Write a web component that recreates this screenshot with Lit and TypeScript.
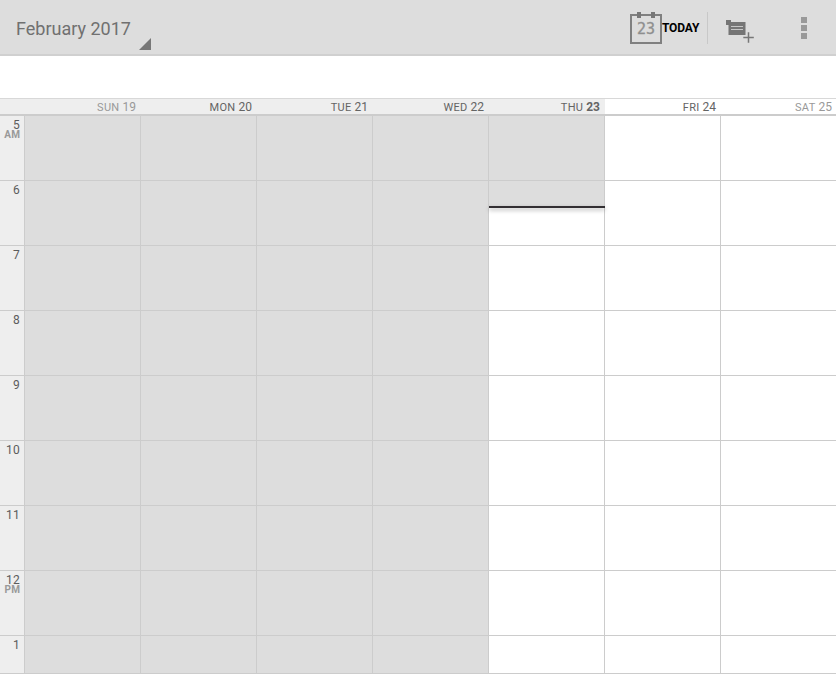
import { LitElement, html, css } from "lit";
import { customElement } from "lit/decorators.js";
import { classMap } from "lit/directives/class-map.js";

interface Day {
  name: string;
  date: number;
  state: "past" | "today" | "future";
  weekend?: boolean;
}

const DAYS: Day[] = [
  { name: "SUN", date: 19, state: "past", weekend: true },
  { name: "MON", date: 20, state: "past" },
  { name: "TUE", date: 21, state: "past" },
  { name: "WED", date: 22, state: "past" },
  { name: "THU", date: 23, state: "today" },
  { name: "FRI", date: 24, state: "future" },
  { name: "SAT", date: 25, state: "future", weekend: true },
];

const HOURS: { label: string; period?: string }[] = [
  { label: "5", period: "AM" },
  { label: "6" },
  { label: "7" },
  { label: "8" },
  { label: "9" },
  { label: "10" },
  { label: "11" },
  { label: "12", period: "PM" },
  { label: "1" },
];

@customElement("calendar-bar")
class CalendarBar extends LitElement {
  static styles = css`
    :host {
      display: flex;
      align-items: flex-start;
      box-sizing: border-box;
      height: 56px;
      background: #ddd;
      border-bottom: 2px solid #d0d0d0;
    }
    .title {
      display: flex;
      flex: 1;
      padding-left: 16px;
      font-size: 18px;
      line-height: 22px;
      color: #707070;
    }
    .month {
      width: 123px;
      margin-top: 18px;
      white-space: nowrap;
    }
    .corner {
      width: 12px;
      height: 12px;
      margin-top: 38px;
    }
    .today {
      display: flex;
      width: 77px;
      height: 32px;
      margin-top: 12px;
      border-right: 1px solid #c8c8c8;
      font-size: 12px;
      font-weight: 700;
      line-height: 32px;
      letter-spacing: -0.15px;
      color: #000;
    }
    .day-icon {
      width: 32px;
      height: 32px;
      flex: none;
    }
    .add {
      width: 30px;
      height: 26px;
      margin: 18px 0 0 17px;
    }
    .more {
      display: grid;
      gap: 2px;
      margin: 17px 29px 0 46px;
    }
    .more i {
      width: 6px;
      height: 6px;
      background: #999;
    }
    .num {
      font: 15px "DejaVu Sans Mono", monospace;
      letter-spacing: 0;
    }
  `;

  render() {
    return html`
      <div class="title">
        <span class="month">February 2017</span>
        <svg class="corner" viewBox="0 0 12 12"><path d="M12 0V12H0Z" fill="#777" /></svg>
      </div>
      <div class="today">
        <svg class="day-icon" viewBox="0 0 32 32">
          <rect x="1" y="3" width="30" height="28" fill="none" stroke="#808080" stroke-width="2" />
          <path d="M7 0h4v6H7zM21 0h4v6h-4z" fill="#777" />
          <text class="num" x="7" y="22" textLength="18" lengthAdjust="spacing" fill="#8b8b8b" stroke="#999" stroke-width=".4">23</text>
        </svg>
        <span>TODAY</span>
      </div>
      <svg class="add" viewBox="0 0 30 26">
        <path d="M1 2h5v2h14.500v13H3.500V7H1z" fill="#757575" />
        <path d="M6 8.500h12M6 11.500h12" stroke="#c6c6c6" stroke-width="1" />
        <path d="M18.300 19.500h10.500M23.500 14.200v10.600" stroke="#777" stroke-width="1.500" />
      </svg>
      <div class="more"><i></i><i></i><i></i></div>
    `;
  }
}

@customElement("week-grid")
class WeekGrid extends LitElement {
  static styles = css`
    :host {
      display: block;
      color: #646464;
    }
    .row {
      display: grid;
      grid-template-columns: 25px repeat(6, 116px) 1fr;
    }
    .head {
      height: 18px;
      box-sizing: border-box;
      grid-template-rows: 15px;
      border-top: 1px solid #d8d8d8;
      border-bottom: 2px solid #ccc;
      line-height: 16px;
    }
    .day {
      text-align: right;
      padding-right: 5px;
      font-size: 12px;
      white-space: nowrap;
    }
    .day:last-child {
      padding-right: 4px;
    }
    .name {
      font-size: 11px;
      letter-spacing: 0.3px;
    }
    .gutter,
    .shaded {
      background: #eee;
    }
    .weekend {
      color: #999;
    }
    b {
      font-weight: 400;
    }
    .now b {
      font-weight: 700;
    }
    .body {
      position: relative;
    }
    .hour {
      height: 65px;
    }
    .cut {
      height: 38px;
    }
    .cell,
    .time {
      box-sizing: border-box;
      border-right: 1px solid #ccc;
      border-bottom: 1px solid #ccc;
    }
    .cell:last-child {
      border-right: 0;
    }
    .time {
      padding: 3px 4px 0 0;
      background: #eee;
      text-align: right;
    }
    .label,
    .period {
      display: block;
    }
    .label {
      height: 11px;
      font-size: 12px;
      line-height: 12px;
      letter-spacing: 0.3px;
      color: #5c5c5c;
    }
    .period {
      font-size: 10px;
      font-weight: 700;
      line-height: 10px;
      letter-spacing: 0.1px;
      color: #999;
    }
    .past {
      background: #ddd;
    }
    .partial {
      background: linear-gradient(#ddd 26px, #fff 26px);
    }
    .marker {
      position: absolute;
      left: 489px;
      top: 90px;
      width: 116px;
      height: 2px;
      background: #332f33;
      box-shadow: 0 2px 4px rgba(0, 0, 0, 0.35);
    }
  `;

  render() {
    return html`
      <div class="row head">
        <span class="gutter"></span>
        ${DAYS.map(
          (d) => html`<span
            class=${classMap({ day: true, shaded: d.state !== "future", weekend: !!d.weekend, now: d.state === "today" })}
            ><span class="name">${d.name}</span> <b>${d.date}</b></span
          >`
        )}
      </div>
      <div class="body">
        ${HOURS.map(
          (h, row) => html`<div class=${classMap({ row: true, hour: true, cut: row === HOURS.length - 1 })}>
            <div class="time">
              <span class="label">${h.label}</span>${h.period ? html`<span class="period">${h.period}</span>` : ""}
            </div>
            ${DAYS.map((d) => {
              const today = d.state === "today";
              return html`<div
                class=${classMap({ cell: true, past: d.state === "past" || (today && row === 0), partial: today && row === 1 })}
              ></div>`;
            })}
          </div>`
        )}
        <div class="marker"></div>
      </div>
    `;
  }
}

@customElement("app-root")
class AppRoot extends LitElement {
  static styles = css`
    :host {
      display: block;
      height: 674px;
      overflow: hidden;
      background: #fff;
      font-family: Roboto, sans-serif;
    }
    .all-day {
      height: 42px;
    }
  `;

  render() {
    return html`
      <calendar-bar></calendar-bar>
      <div class="all-day"></div>
      <week-grid></week-grid>
    `;
  }
}
